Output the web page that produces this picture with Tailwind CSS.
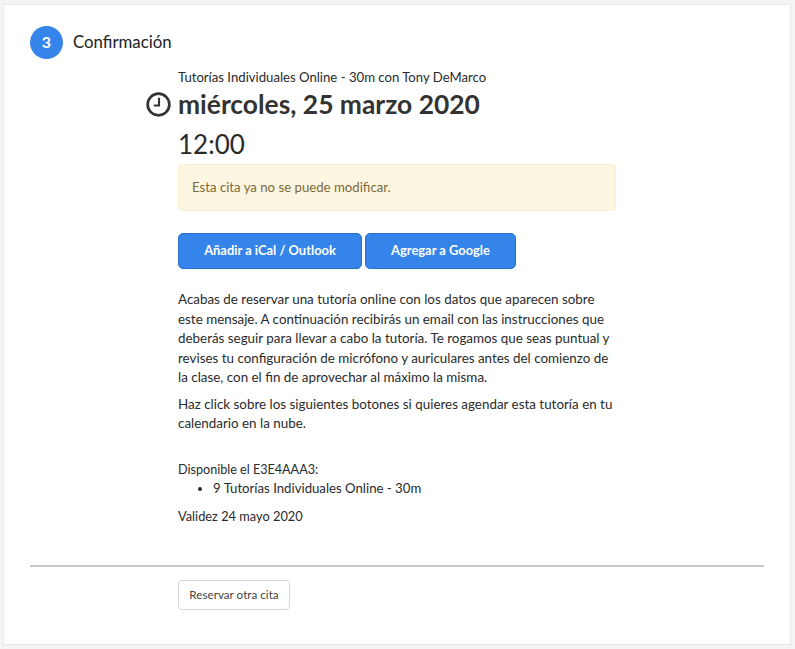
<!DOCTYPE html>
<html lang="es">
<head>
    <meta charset="UTF-8">
    <meta name="viewport" content="width=device-width, initial-scale=1.0">
    <title>Confirmación</title>
    <script src="https://cdn.jsdelivr.net/npm/@tailwindcss/browser@4"></script>
</head>
<body class="bg-[#f4f4f4] h-[649px] overflow-hidden font-['Lato','Noto_Sans',sans-serif] text-[#292b2c] pt-[4px] pl-[3px] pr-[4px]">
    <div class="bg-white border border-[#e8e8e8] h-[641px] pt-[20px] pl-[26px] pr-[26px]">
        <div class="flex items-center gap-[10px] h-[34px]">
            <div class="w-[33px] h-[33px] rounded-full bg-[#3584e9] text-white font-bold text-[16px] flex items-center justify-center">3</div>
            <div class="text-[16.8px] text-[#222]">Confirmación</div>
        </div>

        <div class="ml-[148px] w-[438px] mt-[8px]">
            <p class="text-[13.15px] leading-[20px]">Tutorías Individuales Online - 30m con Tony DeMarco</p>
            <div class="relative">
                <svg class="absolute left-[-32px] top-[5px] w-[25px] h-[25px]" viewBox="0 0 24 24" fill="none" stroke="#333" stroke-width="2.6">
                    <circle cx="12" cy="12" r="10.4"/>
                    <path d="M12.5 5.5V13H7.5" stroke-width="2"/>
                </svg>
                <h1 class="text-[26.4px] leading-[34px] font-bold text-[#333]">miércoles, 25 marzo 2020</h1>
            </div>
            <p class="text-[26px] leading-[34px] mt-[6px] text-[#2a2a2a]">12:00</p>
            <div class="mt-[3px] h-[47px] flex items-center px-[13px] bg-[#fcf5e0] border border-[#faefd2] rounded-[4px] text-[13.2px] text-[#7d6a3c]">Esta cita ya no se puede modificar.</div>

            <div class="flex gap-[3px] mt-[22px]">
                <button class="w-[184px] h-[36px] bg-[#3584e9] border border-[#2a70cf] rounded-[5px] text-white font-bold text-[12.9px]">Añadir a iCal / Outlook</button>
                <button class="w-[151px] h-[36px] bg-[#3584e9] border border-[#2a70cf] rounded-[5px] text-white font-bold text-[12.9px]">Agregar a Google</button>
            </div>

            <p class="mt-[21px] text-[13.4px] leading-[19.5px]">Acabas de reservar una tutoría online con los datos que aparecen sobre este mensaje. A continuación recibirás un email con las instrucciones que deberás seguir para llevar a cabo la tutoría. Te rogamos que seas puntual y revises tu configuración de micrófono y auriculares antes del comienzo de la clase, con el fin de aprovechar al máximo la misma.</p>
            <p class="mt-[7px] text-[13.4px] leading-[19.5px]">Haz click sobre los siguientes botones si quieres agendar esta tutoría en tu calendario en la nube.</p>

            <p class="mt-[26px] text-[12.6px] leading-[19.5px]">Disponible el E3E4AAA3:</p>
            <ul class="list-disc pl-[35px] text-[13.2px] leading-[19.5px]">
                <li>9 Tutorías Individuales Online - 30m</li>
            </ul>
            <p class="mt-[8px] text-[12.8px] leading-[19.5px]">Validez 24 mayo 2020</p>
        </div>

        <hr class="mt-[39px] border-0 h-[2px] bg-[#c9c9c9]">

        <div class="ml-[148px] mt-[13px]">
            <button class="w-[112px] h-[30px] bg-white border border-[#d6d6d6] rounded-[4px] text-[11.7px] text-[#444]">Reservar otra cita</button>
        </div>
    </div>
</body>
</html>
